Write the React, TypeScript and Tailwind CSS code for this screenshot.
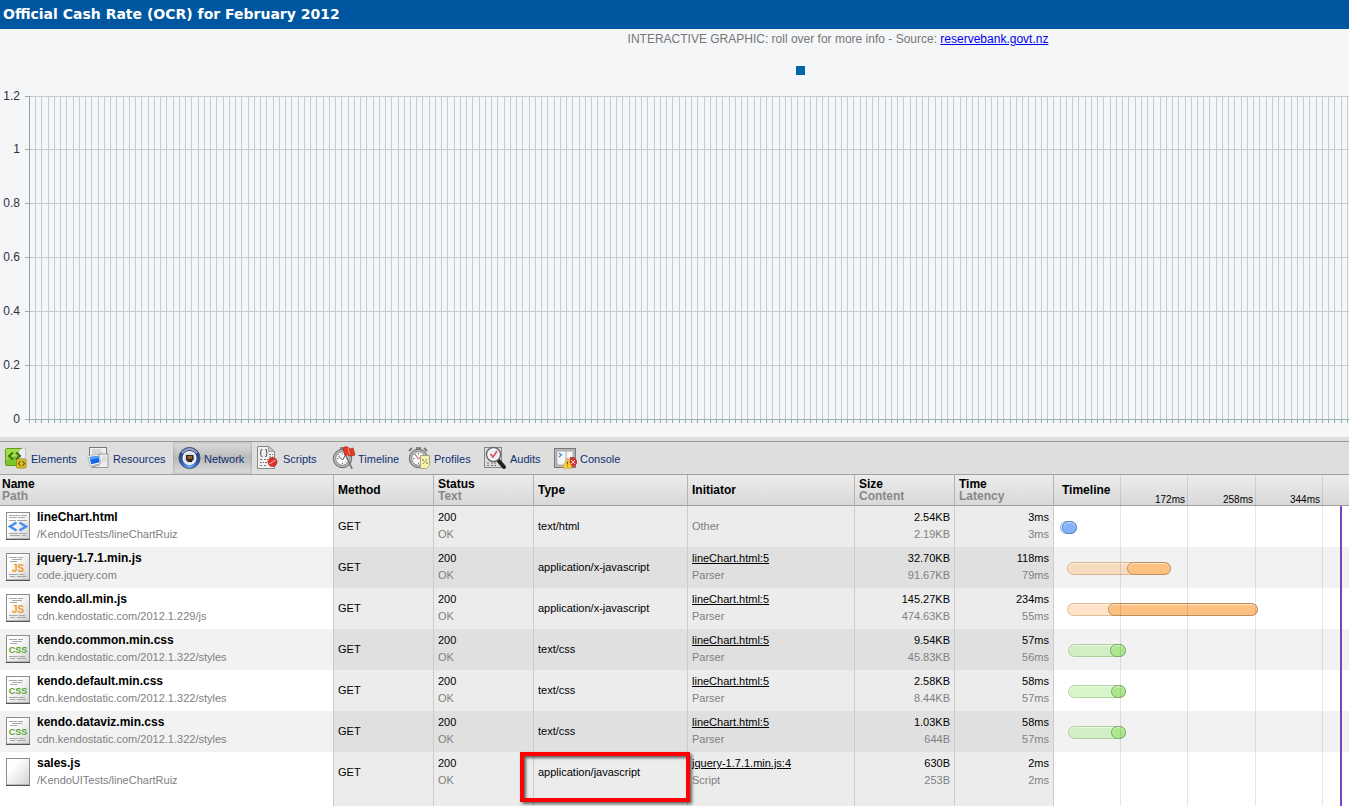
import React from 'react'

const requests = [
  { name: 'lineChart.html', path: '/KendoUITests/lineChartRuiz', kind: 'html', type: 'text/html', initiator: 'Other', by: '', size: '2.54KB', content: '2.19KB', time: '3ms', latency: '3ms', start: 6, mid: 8, end: 23, color: 'blue' },
  { name: 'jquery-1.7.1.min.js', path: 'code.jquery.com', kind: 'js', type: 'application/x-javascript', initiator: 'lineChart.html:5', by: 'Parser', size: '32.70KB', content: '91.67KB', time: '118ms', latency: '79ms', start: 13, mid: 73, end: 117, color: 'orange' },
  { name: 'kendo.all.min.js', path: 'cdn.kendostatic.com/2012.1.229/js', kind: 'js', type: 'application/x-javascript', initiator: 'lineChart.html:5', by: 'Parser', size: '145.27KB', content: '474.63KB', time: '234ms', latency: '55ms', start: 13, mid: 54, end: 204, color: 'orange' },
  { name: 'kendo.common.min.css', path: 'cdn.kendostatic.com/2012.1.322/styles', kind: 'css', type: 'text/css', initiator: 'lineChart.html:5', by: 'Parser', size: '9.54KB', content: '45.83KB', time: '57ms', latency: '56ms', start: 14, mid: 56, end: 72, color: 'green' },
  { name: 'kendo.default.min.css', path: 'cdn.kendostatic.com/2012.1.322/styles', kind: 'css', type: 'text/css', initiator: 'lineChart.html:5', by: 'Parser', size: '2.58KB', content: '8.44KB', time: '58ms', latency: '57ms', start: 14, mid: 57, end: 72, color: 'green' },
  { name: 'kendo.dataviz.min.css', path: 'cdn.kendostatic.com/2012.1.322/styles', kind: 'css', type: 'text/css', initiator: 'lineChart.html:5', by: 'Parser', size: '1.03KB', content: '644B', time: '58ms', latency: '57ms', start: 14, mid: 57, end: 72, color: 'green' },
  { name: 'sales.js', path: '/KendoUITests/lineChartRuiz', kind: 'blank', type: 'application/javascript', initiator: 'jquery-1.7.1.min.js:4', by: 'Script', size: '630B', content: '253B', time: '2ms', latency: '2ms', start: 0, mid: 0, end: 0, color: '' },
]

const barColors: Record<string, { light: string; solid: string }> = {
  blue: { light: 'bg-[#84b2fa]/40 border-[#3565b0]/40', solid: 'bg-[#84b2fa] border-[#5580bd]' },
  orange: { light: 'bg-[#fdc080]/45 border-[#a87238]/35', solid: 'bg-[#fdc080] border-[#bd8d5a]' },
  green: { light: 'bg-[#abe88d]/45 border-[#6c9c55]/35', solid: 'bg-[#abe88d] border-[#7da56a]' },
}

const yLabels = ['1.2', '1', '0.8', '0.6', '0.4', '0.2', '0']

function Chart() {
  const columns = Array.from({ length: 340 }, (_, i) => Math.round(29 + i * 6.246))
  const rowY = (i: number) => Math.floor(67 + i * 53.85)
  return (
    <svg className="absolute inset-0 h-full w-full" shapeRendering="crispEdges">
      {columns.map((x) => (
        <g key={x}>
          <rect x={x} y="67" width="1" height="323" fill="#c0ced3" />
          <rect x={x} y="390" width="1" height="4" fill="#8ea4a8" />
        </g>
      ))}
      {yLabels.map((label, i) => (
        <g key={label}>
          <rect x="29" y={rowY(i)} width="100%" height="1" fill={i === 6 ? '#9db0b5' : '#c0ced3'} />
          <rect x="25" y={rowY(i)} width="4" height="1" fill="#9db0b5" />
          <text x="20" y={rowY(i) + 4} textAnchor="end" fontSize="12" fill="#303040">{label}</text>
        </g>
      ))}
      <rect x="29" y="67" width="1" height="324" fill="#8ea4a8" />
    </svg>
  )
}

function ElementsIcon() {
  return (
    <svg width="24" height="24" viewBox="0 0 24 24">
      <rect x=".5" y="2.500" width="18" height="17" rx="1.500" fill="#7dc52c" stroke="#5e9e1c" />
      <path d="M1 3h16v7Q10 9 1 14z" fill="#a4dd4c" />
      <path d="M14 4l4-2h2.500v13H14z" fill="#eee" stroke="#aaa" strokeWidth=".6" />
      <path d="M8 6.500L4 10l4 3.500M11 6.500l4 3.500-4 3.500" fill="none" stroke="#3c6d14" strokeWidth="2" />
      <rect x="11.500" y="13" width="9.500" height="9" rx="1.500" fill="#dfc12a" stroke="#a48b14" />
      <path d="M15.500 15l-2 2.500 2 2.500M17.500 15l2 2.500-2 2.500" fill="none" stroke="#67550a" strokeWidth="1.200" />
    </svg>
  )
}

function ResourcesIcon() {
  return (
    <svg width="24" height="24" viewBox="0 0 24 24">
      <rect x="2.500" y="1.500" width="17" height="13" fill="#f2f2f2" stroke="#777" />
      <path d="M5 4h9M5 6h11M5 8h9" stroke="#bbb" />
      <path d="M12 8h9v13.500H4L12 19z" fill="#ededed" stroke="#999" />
      <path d="M15 11h4M15 13h4M15 15h4" stroke="#ccc" />
      <path d="M.8 9.500L12 8.500l2 9-11 2.500z" fill="#fff" stroke="#aaa" strokeWidth=".8" />
      <path d="M2.500 11l9-1.200 1.300 6.500-8.800 2z" fill="#1464ea" />
      <path d="M2.500 11l9-1.200.5 2.200-9 1.700z" fill="#53a1fa" />
    </svg>
  )
}

function NetworkIcon() {
  return (
    <svg width="24" height="24" viewBox="0 0 24 24">
      <defs>
        <radialGradient id="net" cx=".5" cy=".95" r=".9">
          <stop offset="0" stopColor="#75baff" />
          <stop offset=".45" stopColor="#2f5cb0" />
          <stop offset="1" stopColor="#2a3b70" />
        </radialGradient>
      </defs>
      <circle cx="11.500" cy="12" r="10.500" fill="url(#net)" stroke="#3b4c77" />
      <circle cx="11.500" cy="12" r="6.300" fill="#d9dde4" stroke="#f5f7fa" strokeWidth="1.500" />
      <path d="M8 9h7.500v5.500h-1.500v1.500H9.500v-1.500H8z" fill="#2c2520" />
      <path d="M9.500 10h4.500v3H9.500z" fill="#97622b" />
      <path d="M4 7Q11.500-1 19 7" fill="none" stroke="#c3d0ea" strokeWidth="2" opacity=".7" />
    </svg>
  )
}

function ScriptsIcon() {
  return (
    <svg width="24" height="24" viewBox="0 0 24 24">
      <path d="M.500.500h11l6 5v17H.5z" fill="#f0f0f0" stroke="#888" />
      <path d="M11.500.500v5h6z" fill="#ccc" stroke="#888" strokeWidth=".7" />
      <path d="M5.500 3.500q-2 0-1.500 2 0 1.500-1 1.500 1 0 1 1.500-.5 2 1.500 2M8 3.500q2 0 1.500 2 0 1.500 1 1.500-1 0-1 1.500.5 2-1.500 2" fill="none" stroke="#555" strokeWidth="1.100" />
      <path d="M3 13.500h3m1 0h4M3 16.500h4m1 0h2M3 19.500h3m1 0h3M12 8.500h4M12 11h4" stroke="#777" strokeDasharray="2 1" />
      <circle cx="15.500" cy="16" r="4.500" fill="#dd302b" stroke="#ad2420" strokeWidth=".7" />
      <path d="M12.500 18l6-4" stroke="#f0918a" strokeWidth="1.500" />
    </svg>
  )
}

function Watch() {
  return (
    <g>
      <path d="M8 1h5v3H8z" fill="#888" />
      <circle cx="10.500" cy="12.500" r="9.200" fill="#b9b9b9" stroke="#666" />
      <circle cx="10.500" cy="12.500" r="6.800" fill="#f8f8f8" stroke="#888" />
      <path d="M10.500 7v1.500M10.500 16.500V18M5 12.500h1.500M14.500 12.500H16M6.500 8.500l1 1M14.500 16.500l-1-1" stroke="#777" />
    </g>
  )
}

function TimelineIcon() {
  return (
    <svg width="24" height="24" viewBox="0 0 24 24">
      <Watch />
      <path d="M12 5l8 18" stroke="#777" strokeWidth="1.800" />
      <path d="M6.500 10l4 4 3-5" stroke="#555" fill="none" />
      <path d="M11 2q3-2.500 5-.5 2 2 5 .5l2 7q-4 2-6 .5-2-1.500-4 0z" fill="#df3b25" stroke="#a92817" strokeWidth=".7" />
      <path d="M16 2l1.500 7" stroke="#f48a70" />
    </svg>
  )
}

function ProfilesIcon() {
  return (
    <svg width="24" height="24" viewBox="0 0 24 24">
      <path d="M1 5l3-3M16 2l3 3" stroke="#777" strokeWidth="2" />
      <Watch />
      <path d="M10.500 13L7 8M10 13l4-3" stroke="#c55" />
      <path d="M12.500 9.500h9v10l-3 3h-6z" fill="#f6f1b0" stroke="#aaa472" />
      <path d="M15 18l4-5" stroke="#9a9563" />
      <circle cx="15" cy="14" r="1" fill="#9a9563" />
      <circle cx="19" cy="17" r="1" fill="#9a9563" />
    </svg>
  )
}

function AuditsIcon() {
  return (
    <svg width="24" height="24" viewBox="0 0 24 24">
      <rect x=".5" y="1.500" width="17" height="20" fill="#ddd" stroke="#888" />
      <path d="M3 17h2m2 0h6M3 19.500h2m2 0h6" stroke="#777" strokeDasharray="2 1" />
      <path d="M14 14l6 7" stroke="#222" strokeWidth="4" strokeLinecap="round" />
      <circle cx="9.500" cy="8.500" r="7" fill="#e9f1f8" stroke="#666" strokeWidth="1.500" />
      <circle cx="9.500" cy="8.500" r="5.500" fill="none" stroke="#fff" />
      <path d="M6.500 8L9 11l4-6" fill="none" stroke="#df4848" strokeWidth="1.500" />
    </svg>
  )
}

function ConsoleIcon() {
  return (
    <svg width="24" height="24" viewBox="0 0 24 24">
      <rect x=".5" y="2.500" width="21" height="19" fill="#b8b8b8" stroke="#777" />
      <rect x="3" y="5" width="16" height="14" fill="#f4f6fa" stroke="#999" strokeWidth=".7" />
      <path d="M12 5v14" stroke="#aaa" />
      <path d="M5 7l2.500 2L5 11" fill="none" stroke="#3888df" strokeWidth="1.200" />
      <path d="M16 11.500h4l2.500 3v3L20 20.500h-4z" fill="#d73535" stroke="#a32828" strokeWidth=".7" />
      <path d="M17 14l4 4m0-4l-4 4" stroke="#ffd5d0" />
      <path d="M13.500 12l5 10h-10z" fill="#ffd735" stroke="#c6952b" strokeWidth=".8" />
      <path d="M13.500 15.500v3m0 1v1" stroke="#775517" strokeWidth="1.200" />
    </svg>
  )
}

const tabs = [
  { label: 'Elements', icon: <ElementsIcon />, width: 'w-[82px]' },
  { label: 'Resources', icon: <ResourcesIcon />, width: 'w-[91px]' },
  { label: 'Network', icon: <NetworkIcon />, width: 'w-[79px]' },
  { label: 'Scripts', icon: <ScriptsIcon />, width: 'w-[75px]' },
  { label: 'Timeline', icon: <TimelineIcon />, width: 'w-[76px]' },
  { label: 'Profiles', icon: <ProfilesIcon />, width: 'w-[76px]' },
  { label: 'Audits', icon: <AuditsIcon />, width: 'w-[70px]' },
  { label: 'Console', icon: <ConsoleIcon />, width: 'w-[80px]' },
]

function FileIcon({ kind }: { kind: string }) {
  return (
    <svg width="24" height="28" viewBox="0 0 24 28" className="shrink-0">
      <defs>
        <linearGradient id="paper" x1="0" y1="0" x2="1" y2="1">
          <stop offset=".3" stopColor="#fff" />
          <stop offset="1" stopColor="#d2d2d2" />
        </linearGradient>
      </defs>
      <rect x=".5" y=".5" width="23" height="26.500" fill="url(#paper)" stroke="#8c8c8c" />
      <path d="M0 27.500h24" stroke="#555" />
      {kind === 'html' && (
        <path d="M3 3.500h11m1 0h6M3 5.500h8m1 0h7M3 8.500h7m1 0h10M3 21.500h9m1 0h8M4 23.500h10m2 0h4" stroke="#a8a8a8" />
      )}
      {(kind === 'js' || kind === 'css') && (
        <path d="M3 4.500h8m1 0h5M6 6.500h10M4 8.500h7M3 21.500h9m1 0h6M4 23.500h5m2 0h9" stroke="#a8a8a8" />
      )}
      {kind === 'html' && <path d="M10.500 10.500L4 14.500l6.500 4M13.500 10.500l6.500 4-6.500 4" fill="none" stroke="#4a8df0" strokeWidth="2.500" />}
      {kind === 'js' && <text x="12" y="19" textAnchor="middle" fontSize="10" fontWeight="bold" fill="#f39a2b">JS</text>}
      {kind === 'css' && <text x="12" y="18" textAnchor="middle" fontSize="9" fontWeight="bold" fill="#58a62c">CSS</text>}
    </svg>
  )
}

function TwoLines({ top, bottom }: { top: React.ReactNode; bottom: string }) {
  return (
    <>
      <div className="h-[17px] leading-[17px]">{top}</div>
      <div className="h-[17px] leading-[17px] text-[#808080]">{bottom}</div>
    </>
  )
}

const th = 'border-r border-b border-r-[#b3b3b3] border-b-[#a0a0a0] pl-1'
const td = 'border-r border-[#ccc] px-1 group-odd:bg-[#ececec] group-even:bg-[#e0e0e0]'
const tdTop = `${td} pt-[3px] align-top`

function App() {
  return (
    <div className="flex h-screen flex-col overflow-hidden bg-[#f5f6f8] font-['Liberation_Sans',Arial,sans-serif] text-[11px] text-black">
      <h1 className="h-[29px] shrink-0 bg-[#0057a1] pl-[3px] font-['DejaVu_Sans',sans-serif] text-[14px] leading-7 font-bold text-white">
        Official Cash Rate (OCR) for February 2012
      </h1>

      <section className="relative h-[408px] shrink-0">
        <Chart />
        <p className="relative pt-[2px] pl-[327px] text-center text-[12px] leading-4 text-[#777]">
          INTERACTIVE GRAPHIC: roll over for more info - Source:{' '}
          <a href="#" className="text-[#0000ee] underline">reservebank.govt.nz</a>
        </p>
        <div className="relative mt-[19px] flex justify-center pl-[252px]">
          <div className="h-[9px] w-[9px] bg-[#0069a5]" />
        </div>
      </section>

      <div className="h-[5px] shrink-0 border-b border-[#999] bg-[#dedede]" />
      <nav className="flex h-[33px] shrink-0 border-b border-[#a0a0a0] bg-[#dedede]">
        {tabs.map((tab) => (
          <button
            key={tab.label}
            className={`${tab.width} flex h-8 shrink-0 items-center gap-[2px] pl-[5px] whitespace-nowrap text-[#0f3073] ${tab.label === 'Network' ? 'bg-linear-to-b from-[#dedede] via-[#bababa] to-[#dedede] inset-shadow-[0_0_3px_#00000040]' : ''}`}
          >
            {tab.icon}
            <span className="pt-[2px]">{tab.label}</span>
          </button>
        ))}
      </nav>

      <div className="relative flex grow flex-col bg-white">
        <table className="w-full table-fixed border-separate border-spacing-0">
          <colgroup>
            <col className="w-[334px]" />
            <col className="w-[100px]" />
            <col className="w-[100px]" />
            <col className="w-[154px]" />
            <col className="w-[167px]" />
            <col className="w-[100px]" />
            <col className="w-[99px]" />
            <col />
          </colgroup>
          <thead>
            <tr className="h-[31px] bg-linear-to-b from-[#ececec] to-[#d8d8d8] text-left text-[12px] leading-3">
              <th className="border-r border-b border-r-[#b3b3b3] border-b-[#a0a0a0] pl-[2px]">Name<div className="text-[#888]">Path</div></th>
              <th className={th}>Method</th>
              <th className={th}>Status<div className="text-[#888]">Text</div></th>
              <th className={th}>Type</th>
              <th className={th}>Initiator</th>
              <th className={th}>Size<div className="text-[#888]">Content</div></th>
              <th className={th}>Time<div className="text-[#888]">Latency</div></th>
              <th className="border-b border-[#a0a0a0] pl-2">Timeline</th>
            </tr>
          </thead>
          <tbody>
            {requests.map((r) => (
              <tr key={r.name} className="group h-[41px] odd:bg-white even:bg-[#f2f2f2]">
                <td className="border-r border-[#ccc] pt-[3px] pl-[6px] align-top">
                  <div className="flex items-center gap-[7px]">
                    <FileIcon kind={r.kind} />
                    <div><TwoLines top={<b className="text-[12px]">{r.name}</b>} bottom={r.path} /></div>
                  </div>
                </td>
                <td className={td}>GET</td>
                <td className={tdTop}><TwoLines top="200" bottom="OK" /></td>
                <td className={td}>{r.type}</td>
                {r.by ? (
                  <td className={tdTop}><TwoLines top={<a href="#" className="underline">{r.initiator}</a>} bottom={r.by} /></td>
                ) : (
                  <td className={`${td} text-[#808080]`}>{r.initiator}</td>
                )}
                <td className={`${tdTop} text-right`}><TwoLines top={r.size} bottom={r.content} /></td>
                <td className={`${tdTop} text-right`}><TwoLines top={r.time} bottom={r.latency} /></td>
                <td className="relative">
                  {r.color && (
                    <>
                      <div className={`${barColors[r.color].light} absolute top-[15px] h-[13px] rounded-full border inset-shadow-[0_1px_1px_#ffffff90]`} style={{ left: r.start, width: r.end - r.start }} />
                      <div className={`${barColors[r.color].solid} absolute top-[15px] h-[13px] rounded-full border inset-shadow-[0_1px_1px_#ffffff90]`} style={{ left: r.mid, width: r.end - r.mid }} />
                    </>
                  )}
                </td>
              </tr>
            ))}
          </tbody>
        </table>
        <div className="flex grow">
          <div className="w-[334px] border-r border-[#ccc]" />
          <div className="w-[100px] border-r border-[#ccc] bg-[#ececec]" />
          <div className="w-[100px] border-r border-[#ccc] bg-[#ececec]" />
          <div className="w-[154px] border-r border-[#ccc] bg-[#ececec]" />
          <div className="w-[167px] border-r border-[#ccc] bg-[#ececec]" />
          <div className="w-[100px] border-r border-[#ccc] bg-[#ececec]" />
          <div className="w-[99px] border-r border-[#ccc] bg-[#ececec]" />
        </div>

        {/* time scale over the last column */}
        <div className="pointer-events-none absolute inset-y-0 right-0 left-[1054px] flex text-right text-[10px]">
          <div className="w-[67px] border-r border-black/10" />
          <div className="w-[67px] border-r border-black/10 pt-[19px] pr-[2px] leading-3">172ms</div>
          <div className="w-[68px] border-r border-black/10 pt-[19px] pr-[2px] leading-3">258ms</div>
          <div className="w-[67px] border-r border-black/10 pt-[19px] pr-[2px] leading-3">344ms</div>
          <div className="mt-[31px] w-[19px] border-r-2 border-[#7f3fbf]" />
        </div>

        <div className="absolute top-[277px] left-[520px] h-[50px] w-[170px] border-4 border-[#fe0000] shadow-[2px_2px_3px_#00000099,inset_2px_2px_3px_#00000099]" />
      </div>
    </div>
  )
}

export default App
